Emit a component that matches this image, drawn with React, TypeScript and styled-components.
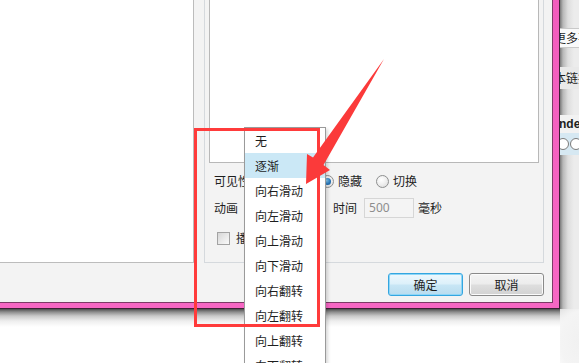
import React from "react";
import styled, { createGlobalStyle } from "styled-components";

const GlobalStyle = createGlobalStyle`
  html, body {
    margin: 0;
    padding: 0;
    background: #fff;
  }
  body {
    font-family: "Noto Sans CJK SC", "Noto Sans", sans-serif;
    font-size: 12px;
    color: #1e1e1e;
  }
  * {
    box-sizing: border-box;
  }
`;

const Stage = styled.div`
  position: relative;
  width: 579px;
  height: 363px;
  overflow: hidden;
  background: #fff;
  display: grid;
  grid-template-columns: 560px 19px;
  grid-template-rows: 309px 54px;
`;

/* ---- dialog window ---- */

const Frame = styled.div`
  background: linear-gradient(180deg, #f25cbd, #f767c4);
  border-right: 1px solid #3e2034;
  border-bottom: 1px solid #3e2034;
  padding: 0 6px 5px 0;
`;

const Client = styled.div`
  height: 100%;
  background: #f3f3f3;
  border-right: 1px solid #7c3a66;
  border-bottom: 1px solid #7c3a66;
  display: grid;
  grid-template-columns: 194px 1fr;
  grid-template-rows: 263px 1fr;
`;

const ListPanel = styled.div`
  background: #fff;
  border-right: 1px solid #bcbcbc;
  border-bottom: 1px solid #bcbcbc;
`;

const RightColumn = styled.div`
  padding: 0 8px 0 10px;
`;

const GroupBox = styled.div`
  height: 263px;
  border: 1px solid #d5d9dd;
  border-top: none;
  padding: 0 4px;
  display: flex;
  flex-direction: column;
`;

const Preview = styled.div`
  height: 163px;
  background: #fff;
  border: 1px solid #b8b8b8;
  border-top: none;
`;

const Form = styled.div`
  padding-left: 5px;
  display: flex;
  flex-direction: column;
`;

const Row = styled.div<{ $top: number }>`
  height: 20px;
  margin-top: ${(p) => p.$top}px;
  display: flex;
  align-items: center;
`;

const Label = styled.span<{ $width?: number }>`
  width: ${(p) => (p.$width ? `${p.$width}px` : "auto")};
  flex: none;
  line-height: 20px;
  white-space: nowrap;
`;

const RadioGroup = styled.div`
  display: flex;
  gap: 14px;
`;

const RadioItem = styled.label`
  display: flex;
  align-items: center;
  gap: 4px;
  line-height: 20px;
`;

const RadioCircle = styled.span<{ $checked?: boolean }>`
  width: 13px;
  height: 13px;
  border-radius: 50%;
  border: 1px solid #8e8f8f;
  background: radial-gradient(circle at 40% 35%, #ffffff 0%, #f0f0f0 45%, #d8d8d8 100%);
  display: flex;
  align-items: center;
  justify-content: center;

  &::after {
    content: "";
    display: ${(p) => (p.$checked ? "block" : "none")};
    width: 7px;
    height: 7px;
    border-radius: 50%;
    background: radial-gradient(circle at 35% 35%, #8fd0f5 0%, #2a7bbf 55%, #124d86 100%);
  }
`;

const Combo = styled.div`
  width: 56px;
  height: 20px;
  margin-right: 11px;
  border: 1px solid #acacac;
  background: linear-gradient(#f2f2f2, #e5e5e5);
  border-radius: 2px;
`;

const NumberInput = styled.div`
  width: 50px;
  height: 20px;
  margin: 0 4px 0 7px;
  border: 1px solid #d6d6d6;
  background: #f4f4f4;
  color: #8d8d8d;
  font-family: "Noto Sans", "Liberation Sans", sans-serif;
  font-size: 12px;
  line-height: 18px;
  padding-left: 4px;
`;

const CheckBox = styled.span`
  width: 13px;
  height: 13px;
  margin: 0 6px 0 3px;
  border: 1px solid #a3a3a3;
  background: linear-gradient(135deg, #d6d6d6 0%, #ececec 60%, #fafafa 100%);
  flex: none;
`;

const ButtonBar = styled.div`
  grid-column: 1 / -1;
  display: flex;
  justify-content: flex-end;
  gap: 6px;
  padding: 10px 8px 0 0;
`;

const Button = styled.button<{ $default?: boolean }>`
  width: 75px;
  height: 23px;
  padding: 0;
  border-radius: 3px;
  font-family: "Noto Sans CJK SC", sans-serif;
  font-size: 12px;
  color: #1e1e1e;
  border: 1px solid ${(p) => (p.$default ? "#34a6e0" : "#8a8a8a")};
  background: ${(p) =>
    p.$default
      ? "linear-gradient(#eef8fd 0%, #dcf0fa 48%, #c8e6f5 52%, #b9dcef 100%)"
      : "linear-gradient(#f4f4f4 0%, #ececec 48%, #dedede 52%, #d2d2d2 100%)"};
  box-shadow: inset 0 0 0 1px ${(p) => (p.$default ? "#8ed6f7" : "#fbfbfb")};
`;

/* ---- window behind ---- */

const BackWindow = styled.div`
  background: linear-gradient(90deg, #7a7a7a 0px, #b8b8b8 3px, #dedede 8px, #ececec 14px);
  display: flex;
  flex-direction: column;
  overflow: hidden;
`;

const BackStrip = styled.div<{ $h: number; $bg: string; $bold?: boolean }>`
  height: ${(p) => p.$h}px;
  flex: none;
  background: ${(p) => p.$bg};
  white-space: nowrap;
  font-size: 12px;
  line-height: ${(p) => p.$h}px;
  font-weight: ${(p) => (p.$bold ? 700 : 400)};
  font-family: ${(p) => (p.$bold ? '"Liberation Sans", sans-serif' : '"Noto Sans CJK SC", sans-serif')};
  display: flex;
  align-items: center;
  gap: 4px;
  overflow: hidden;
`;

const BackBox = styled(BackStrip)`
  border-top: 1px solid #c9c9c9;
  border-bottom: 1px solid #c9c9c9;
`;

const CutText = styled.span<{ $shift: number }>`
  margin-left: ${(p) => -p.$shift}px;
`;

const SmallRadio = styled.span`
  width: 12px;
  height: 12px;
  border-radius: 50%;
  border: 1px solid #7b7b7b;
  background: #fff;
  flex: none;
  margin-left: -3px;
`;

/* ---- shadows below ---- */

const BottomArea = styled.div`
  grid-column: 1 / -1;
  display: grid;
  grid-template-columns: 560px 19px;
`;

const DialogShadow = styled.div`
  background: linear-gradient(180deg, #4d4d4d 0px, #8d8d8d 3px, #c9c9c9 7px, #eeeeee 12px, #ffffff 18px);
`;

const CornerShadow = styled.div`
  background:
    radial-gradient(ellipse 30px 50px at 100% 60%, #f1f1f1 0%, #f4f4f4 60%, rgba(255, 255, 255, 0) 100%),
    linear-gradient(180deg, #d8d8d8 0px, #f0f0f0 10px, #ffffff 20px);
`;

/* ---- popup list ---- */

const DropList = styled.ul`
  position: absolute;
  left: 244px;
  top: 127px;
  width: 82px;
  margin: 0;
  padding: 0;
  list-style: none;
  background: #fff;
  border: 1px solid #9a9a9a;
  box-shadow: 2px 2px 3px rgba(0, 0, 0, 0.15);
`;

const DropItem = styled.li<{ $active?: boolean }>`
  height: 25px;
  line-height: 25px;
  padding-left: 10px;
  white-space: nowrap;
  color: #1e1e1e;
  background: ${(p) => (p.$active ? "#cbe8f6" : "transparent")};
`;

/* ---- annotations ---- */

const MarkBox = styled.div`
  position: absolute;
  left: 194px;
  top: 128px;
  width: 126px;
  height: 199px;
  border: 3px solid #ff3b3b;
  pointer-events: none;
`;

const ArrowLayer = styled.svg`
  position: absolute;
  left: 0;
  top: 0;
  pointer-events: none;
`;

const items = [
  "无",
  "逐渐",
  "向右滑动",
  "向左滑动",
  "向上滑动",
  "向下滑动",
  "向右翻转",
  "向左翻转",
  "向上翻转",
  "向下翻转",
];

export default function App() {
  return (
    <>
      <GlobalStyle />
      <Stage>
        <Frame>
          <Client>
            <ListPanel />
            <RightColumn>
              <GroupBox>
                <Preview />
                <Form>
                  <Row $top={8}>
                    <Label $width={52}>可见性</Label>
                    <RadioGroup>
                      <RadioItem>
                        <RadioCircle />
                        显示
                      </RadioItem>
                      <RadioItem>
                        <RadioCircle $checked />
                        隐藏
                      </RadioItem>
                      <RadioItem>
                        <RadioCircle />
                        切换
                      </RadioItem>
                    </RadioGroup>
                  </Row>
                  <Row $top={7}>
                    <Label $width={52}>动画</Label>
                    <Combo />
                    <Label>时间</Label>
                    <NumberInput>500</NumberInput>
                    <Label>毫秒</Label>
                  </Row>
                  <Row $top={10}>
                    <CheckBox />
                    <Label>播放后隐藏</Label>
                  </Row>
                </Form>
              </GroupBox>
            </RightColumn>
            <ButtonBar>
              <Button $default>确定</Button>
              <Button>取消</Button>
            </ButtonBar>
          </Client>
        </Frame>

        <BackWindow>
          <BackStrip $h={28} $bg="transparent" />
          <BackBox $h={20} $bg="#fafafa">
            <CutText $shift={6}>更多事</CutText>
          </BackBox>
          <BackStrip $h={19} $bg="transparent" />
          <BackStrip $h={22} $bg="#e9e9e9">
            <CutText $shift={6}>本链接</CutText>
          </BackStrip>
          <BackStrip $h={26} $bg="transparent" />
          <BackStrip $h={18} $bg="#f2f2f2" $bold>
            <CutText $shift={1}>nde</CutText>
          </BackStrip>
          <BackStrip $h={22} $bg="#d6e8f2">
            <SmallRadio />
            <SmallRadio />
          </BackStrip>
        </BackWindow>

        <BottomArea>
          <DialogShadow />
          <CornerShadow />
        </BottomArea>

        <DropList>
          {items.map((t, i) => (
            <DropItem key={t} $active={i === 1}>
              {t}
            </DropItem>
          ))}
        </DropList>

        <MarkBox />

        <ArrowLayer width="579" height="363" viewBox="0 0 579 363">
          <polygon
            points="384,59 313,157.5 307,154 306,184 330,170 323.5,165"
            fill="#fb3a3a"
          />
        </ArrowLayer>
      </Stage>
    </>
  );
}
